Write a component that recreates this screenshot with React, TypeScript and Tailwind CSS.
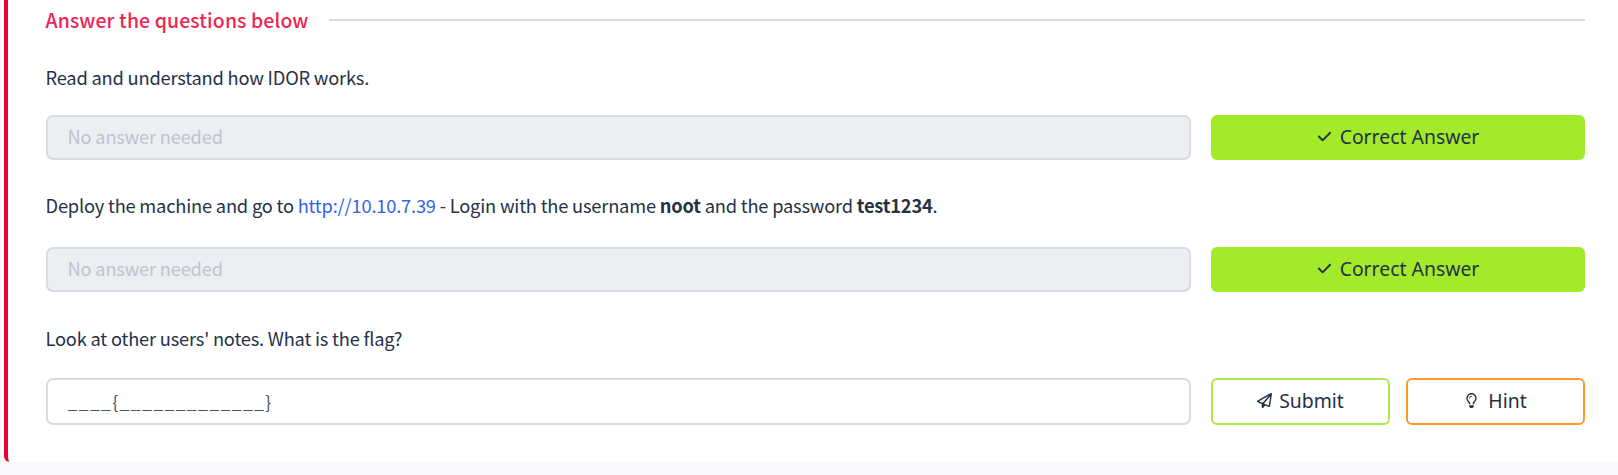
import type { ReactNode } from "react";
import { FaCheck, FaRegLightbulb, FaRegPaperPlane } from "react-icons/fa6";

const row = "flex items-stretch gap-5";
const field =
  "w-[1145.5px] shrink-0 rounded-[7px] border-2 border-[#d8dbe1] px-[20px] font-['Noto_Sans_CJK_SC',sans-serif] outline-none";
const button =
  "flex items-center justify-center rounded-[6px] pb-[2px] font-['Noto_Sans',sans-serif] text-[19.4px] text-[#263146]";

function Question({ children, className }: { children: ReactNode; className: string }) {
  return <p className={`flex h-[30px] items-center whitespace-pre text-[18.3px] tracking-[-0.2px] ${className}`}>{children}</p>;
}

function CorrectRow() {
  return (
    <div className={`${row} h-[45px]`}>
      <input className={`${field} bg-[#edeef2] pb-[2px] text-[18.2px] tracking-[-0.15px] placeholder:text-[#bfc3cd] placeholder:opacity-100`} placeholder="No answer needed" disabled />
      <button className={`${button} flex-1 gap-[8px] bg-[#a3ea2a]`}>
        <FaCheck className="size-[15px]" />
        <span>Correct Answer</span>
      </button>
    </div>
  );
}

export default function App() {
  return (
    <div className="h-[475px] overflow-hidden bg-[#f9f9fb] pl-[4px] font-['Noto_Sans_CJK_SC',sans-serif] text-[#263146]">
      <main className="flex h-[462px] flex-col rounded-bl-[6px] border-l-4 border-[#eb0037] bg-white pr-[33px] pl-[37.5px]">
        <div className="flex h-[40px] shrink-0 items-center gap-[20px]">
          <h2 className="w-[263px] text-[19.4px] font-medium tracking-[0.13px] whitespace-nowrap text-[#ed2454]">Answer the questions below</h2>
          <div className="h-[2px] flex-1 bg-[#d8dbe4]" />
        </div>
        <Question className="mt-[23px] mb-[22px]">Read and understand how IDOR works.</Question>
        <CorrectRow />
        <Question className="mt-[31px] mb-[26px]">
          Deploy the machine and go to <a href="#" className="text-[#2f63e9]">http://10.10.7.39</a> - Login with the username <strong>noot</strong> and the password <strong>test1234</strong>.
        </Question>
        <CorrectRow />
        <Question className="mt-[32px] mb-[24px]">Look at other users' notes. What is the flag?</Question>
        <div className={`${row} h-[47px]`}>
          <input className={`${field} bg-white text-[17.7px] tracking-[1.32px] placeholder:text-[#4c5568] placeholder:opacity-100`} placeholder="____{_____________}" />
          <div className="flex flex-1 gap-4">
            <button className={`${button} flex-1 gap-[7px] border-2 border-[#a9e94b]`}>
              <FaRegPaperPlane className="size-[15px]" />
              <span>Submit</span>
            </button>
            <button className={`${button} flex-1 gap-[9px] border-2 border-[#ff992b]`}>
              <FaRegLightbulb className="size-[15px]" />
              <span>Hint</span>
            </button>
          </div>
        </div>
      </main>
    </div>
  );
}
